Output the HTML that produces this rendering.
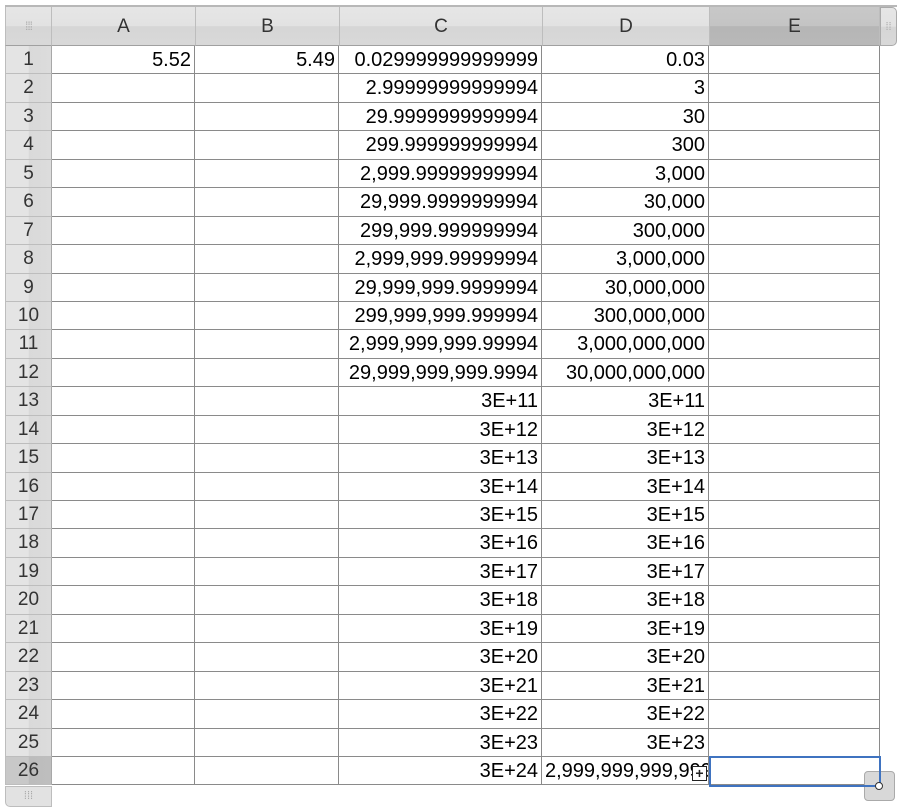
<!DOCTYPE html>
<html><head><meta charset="utf-8"><style>
body{margin:0;width:904px;height:810px;background:#fff;position:relative;overflow:hidden;font-family:"Liberation Sans",Arial,sans-serif;}
.hdr{position:absolute;top:7px;height:39px;box-sizing:border-box;background:linear-gradient(#e6e6e6 0%,#e2e2e2 50%,#d6d6d6 51%,#d8d8d8 100%);border-right:1px solid #bdbdbd;border-bottom:1px solid #a0a0a0;font-size:19px;color:#333;text-align:center;line-height:39px;}
.row{position:absolute;left:5px;width:875px;height:28.44px;display:flex;}
.row div{box-sizing:border-box;height:100%;border-right:1px solid #8a8a8a;border-bottom:1px solid #8a8a8a;font-size:20px;line-height:28px;text-align:right;padding-right:3px;white-space:nowrap;overflow:hidden;color:#000;}
.row .rh{width:47px;background:linear-gradient(90deg,#e4e4e4 0%,#e4e4e4 50%,#d9d9d9 51%,#dcdcdc 100%);color:#333;text-align:center;padding:0;font-size:19px;border-right:1px solid #a8a8a8;border-bottom:1px solid #bdbdbd;border-left:1px solid #bdbdbd;}
.a{width:143px}.b{width:144px}.c{width:203px}.d{width:167px}.e{width:171px}
</style></head><body>
<div style="position:absolute;left:5px;top:5px;width:892px;height:2px;background:#b8b8b8"></div>
<div class="hdr" style="left:5px;width:47px;color:#aaa;font-size:12px;letter-spacing:-1px;border-left:1px solid #bdbdbd">⁞⁞⁞</div>
<div class="hdr" style="left:52px;width:144px">A</div>
<div class="hdr" style="left:196px;width:144px">B</div>
<div class="hdr" style="left:340px;width:203px">C</div>
<div class="hdr" style="left:543px;width:167px">D</div>
<div class="hdr" style="left:710px;width:170px;background:linear-gradient(#c8c8c8 0%,#c4c4c4 50%,#b6b6b6 51%,#b8b8b8 100%)">E</div>
<div class="hdr" style="left:880px;width:17px;border-radius:0 5px 5px 0;border:1px solid #aaa;color:#aaa;font-size:11px">⁞⁞</div>

<div class="row" style="top:46px"><div class="rh">1</div><div class="a">5.52</div><div class="b">5.49</div><div class="c">0.029999999999999</div><div class="d">0.03</div><div class="e"></div></div>
<div class="row" style="top:74.44px"><div class="rh">2</div><div class="a"></div><div class="b"></div><div class="c">2.99999999999994</div><div class="d">3</div><div class="e"></div></div>
<div class="row" style="top:102.88px"><div class="rh">3</div><div class="a"></div><div class="b"></div><div class="c">29.9999999999994</div><div class="d">30</div><div class="e"></div></div>
<div class="row" style="top:131.32px"><div class="rh">4</div><div class="a"></div><div class="b"></div><div class="c">299.999999999994</div><div class="d">300</div><div class="e"></div></div>
<div class="row" style="top:159.76px"><div class="rh">5</div><div class="a"></div><div class="b"></div><div class="c">2,999.99999999994</div><div class="d">3,000</div><div class="e"></div></div>
<div class="row" style="top:188.2px"><div class="rh">6</div><div class="a"></div><div class="b"></div><div class="c">29,999.9999999994</div><div class="d">30,000</div><div class="e"></div></div>
<div class="row" style="top:216.64px"><div class="rh">7</div><div class="a"></div><div class="b"></div><div class="c">299,999.999999994</div><div class="d">300,000</div><div class="e"></div></div>
<div class="row" style="top:245.08px"><div class="rh">8</div><div class="a"></div><div class="b"></div><div class="c">2,999,999.99999994</div><div class="d">3,000,000</div><div class="e"></div></div>
<div class="row" style="top:273.52px"><div class="rh">9</div><div class="a"></div><div class="b"></div><div class="c">29,999,999.9999994</div><div class="d">30,000,000</div><div class="e"></div></div>
<div class="row" style="top:301.96px"><div class="rh">10</div><div class="a"></div><div class="b"></div><div class="c">299,999,999.999994</div><div class="d">300,000,000</div><div class="e"></div></div>
<div class="row" style="top:330.4px"><div class="rh">11</div><div class="a"></div><div class="b"></div><div class="c">2,999,999,999.99994</div><div class="d">3,000,000,000</div><div class="e"></div></div>
<div class="row" style="top:358.84px"><div class="rh">12</div><div class="a"></div><div class="b"></div><div class="c">29,999,999,999.9994</div><div class="d">30,000,000,000</div><div class="e"></div></div>
<div class="row" style="top:387.28px"><div class="rh">13</div><div class="a"></div><div class="b"></div><div class="c">3E+11</div><div class="d">3E+11</div><div class="e"></div></div>
<div class="row" style="top:415.72px"><div class="rh">14</div><div class="a"></div><div class="b"></div><div class="c">3E+12</div><div class="d">3E+12</div><div class="e"></div></div>
<div class="row" style="top:444.16px"><div class="rh">15</div><div class="a"></div><div class="b"></div><div class="c">3E+13</div><div class="d">3E+13</div><div class="e"></div></div>
<div class="row" style="top:472.6px"><div class="rh">16</div><div class="a"></div><div class="b"></div><div class="c">3E+14</div><div class="d">3E+14</div><div class="e"></div></div>
<div class="row" style="top:501.04px"><div class="rh">17</div><div class="a"></div><div class="b"></div><div class="c">3E+15</div><div class="d">3E+15</div><div class="e"></div></div>
<div class="row" style="top:529.48px"><div class="rh">18</div><div class="a"></div><div class="b"></div><div class="c">3E+16</div><div class="d">3E+16</div><div class="e"></div></div>
<div class="row" style="top:557.92px"><div class="rh">19</div><div class="a"></div><div class="b"></div><div class="c">3E+17</div><div class="d">3E+17</div><div class="e"></div></div>
<div class="row" style="top:586.36px"><div class="rh">20</div><div class="a"></div><div class="b"></div><div class="c">3E+18</div><div class="d">3E+18</div><div class="e"></div></div>
<div class="row" style="top:614.8px"><div class="rh">21</div><div class="a"></div><div class="b"></div><div class="c">3E+19</div><div class="d">3E+19</div><div class="e"></div></div>
<div class="row" style="top:643.24px"><div class="rh">22</div><div class="a"></div><div class="b"></div><div class="c">3E+20</div><div class="d">3E+20</div><div class="e"></div></div>
<div class="row" style="top:671.68px"><div class="rh">23</div><div class="a"></div><div class="b"></div><div class="c">3E+21</div><div class="d">3E+21</div><div class="e"></div></div>
<div class="row" style="top:700.12px"><div class="rh">24</div><div class="a"></div><div class="b"></div><div class="c">3E+22</div><div class="d">3E+22</div><div class="e"></div></div>
<div class="row" style="top:728.56px"><div class="rh">25</div><div class="a"></div><div class="b"></div><div class="c">3E+23</div><div class="d">3E+23</div><div class="e"></div></div>
<div class="row" style="top:757px"><div class="rh" style="background:linear-gradient(90deg,#c8c8c8 0%,#c8c8c8 50%,#bcbcbc 51%,#bebebe 100%)">26</div><div class="a"></div><div class="b"></div><div class="c">3E+24</div><div class="d" style="text-align:left;padding-left:3px;padding-right:14px">2,999,999,999,999,999,999,999</div><div class="e"></div></div>

<div style="position:absolute;left:5px;top:786px;width:47px;height:21px;box-sizing:border-box;background:#e2e2e2;border:1px solid #bdbdbd;border-radius:0 0 0 5px;color:#aaa;font-size:11px;text-align:center;line-height:19px">⁞⁞⁞</div>
<div style="position:absolute;left:692px;top:766px;width:15px;height:15px;box-sizing:border-box;border:1.5px solid #222;background:#fff;font-size:14px;line-height:12px;text-align:center;font-weight:bold;color:#222">+</div>
<div style="position:absolute;left:864px;top:771px;width:31px;height:30px;box-sizing:border-box;background:#d8d8d8;border:1px solid #aaa;border-radius:4px"></div>
<div style="position:absolute;left:709px;top:756px;width:172px;height:31px;box-sizing:border-box;border:2px solid #3f73c0;background:transparent"></div>
<div style="position:absolute;left:875px;top:782px;width:8px;height:8px;box-sizing:border-box;border:1.5px solid #333;border-radius:50%;background:#fff"></div>
</body></html>
